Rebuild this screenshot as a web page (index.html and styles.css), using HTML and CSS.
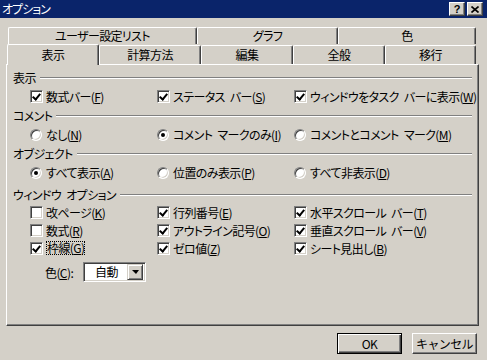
FILE: index.html
```html
<!DOCTYPE html>
<html lang="ja">
<head>
  <meta charset="UTF-8" />
  <title>オプション</title>
  <link rel="stylesheet" href="styles.css">
</head>
<body>

<div class="titlebar">
  <span class="title">オプション</span>
  <div class="caption-buttons">
    <span class="cap-btn help">?</span>
    <span class="cap-btn">
      <svg width="8" height="7" viewBox="0 0 8 7"><path d="M0.5 0.5 L7.5 6.5 M7.5 0.5 L0.5 6.5" stroke="#000" stroke-width="1.6"/></svg>
    </span>
  </div>
</div>

<div class="tabs">
  <div class="tab-row back">
    <div class="tab">ユーザー設定リスト</div>
    <div class="tab">グラフ</div>
    <div class="tab">色</div>
  </div>
  <div class="tab-row front">
    <div class="tab selected">表示</div>
    <div class="tab">計算方法</div>
    <div class="tab">編集</div>
    <div class="tab">全般</div>
    <div class="tab">移行</div>
  </div>
</div>

<div class="panel">
  <div class="group">
    <div class="group-title"><span>表示</span></div>
    <div class="opts">
      <div class="opt"><span class="chk on"></span>数式バー(<u>F</u>)</div>
      <div class="opt"><span class="chk on"></span>ステータス バー(<u>S</u>)</div>
      <div class="opt"><span class="chk on"></span>ウィンドウをタスク バーに表示(<u>W</u>)</div>
    </div>
  </div>

  <div class="group">
    <div class="group-title"><span>コメント</span></div>
    <div class="opts">
      <div class="opt"><span class="radio"></span>なし(<u>N</u>)</div>
      <div class="opt"><span class="radio on"></span>コメント マークのみ(<u>I</u>)</div>
      <div class="opt"><span class="radio"></span>コメントとコメント マーク(<u>M</u>)</div>
    </div>
  </div>

  <div class="group">
    <div class="group-title"><span>オブジェクト</span></div>
    <div class="opts">
      <div class="opt"><span class="radio on"></span>すべて表示(<u>A</u>)</div>
      <div class="opt"><span class="radio"></span>位置のみ表示(<u>P</u>)</div>
      <div class="opt"><span class="radio"></span>すべて非表示(<u>D</u>)</div>
    </div>
  </div>

  <div class="group window-opts">
    <div class="group-title"><span>ウィンドウ オプション</span></div>
    <div class="opts">
      <div class="opt"><span class="chk"></span>改ページ(<u>K</u>)</div>
      <div class="opt"><span class="chk on"></span>行列番号(<u>E</u>)</div>
      <div class="opt"><span class="chk on"></span>水平スクロール バー(<u>T</u>)</div>
      <div class="opt"><span class="chk"></span>数式(<u>R</u>)</div>
      <div class="opt"><span class="chk on"></span>アウトライン記号(<u>O</u>)</div>
      <div class="opt"><span class="chk on"></span>垂直スクロール バー(<u>V</u>)</div>
      <div class="opt"><span class="chk on"></span><span class="focus">枠線(<u>G</u>)</span></div>
      <div class="opt"><span class="chk on"></span>ゼロ値(<u>Z</u>)</div>
      <div class="opt"><span class="chk on"></span>シート見出し(<u>B</u>)</div>
    </div>
    <div class="color-row">
      <span class="color-label">色(<u>C</u>):</span>
      <div class="combo">
        <span class="combo-text">自動</span>
        <span class="combo-arrow"></span>
      </div>
    </div>
  </div>
</div>

<div class="buttons">
  <button class="btn default">OK</button>
  <button class="btn">キャンセル</button>
</div>

</body>
</html>
```

FILE: styles.css
```css
body {
  margin: 0;
  width: 487px;
  height: 360px;
  overflow: hidden;
  background-color: #D4D0C8;
  font-family: "Noto Sans CJK JP", "Liberation Sans", sans-serif;
  font-size: 12px;
  font-feature-settings: "palt";
  letter-spacing: -0.6px;
  word-spacing: 3px;
  color: #000;
}

u {
  text-decoration: underline;
  text-underline-offset: 1px;
}

/* title bar */
.titlebar {
  display: flex;
  justify-content: space-between;
  align-items: center;
  height: 18px;
  padding: 0 4px 0 2px;
  background-color: #0A246A;
}

.title {
  color: #fff;
  font-size: 12px;
  line-height: 18px;
  letter-spacing: -1px;
}

.caption-buttons {
  display: flex;
  gap: 2px;
}

.cap-btn {
  display: flex;
  justify-content: center;
  align-items: center;
  width: 16px;
  height: 14px;
  box-sizing: border-box;
  background-color: #D4D0C8;
  border-top: 1px solid #fff;
  border-left: 1px solid #fff;
  border-right: 1px solid #404040;
  border-bottom: 1px solid #404040;
  box-shadow: inset -1px -1px #808080;
  font-family: "Liberation Sans", sans-serif;
  font-weight: bold;
  font-size: 11px;
  line-height: 12px;
  letter-spacing: 0;
}

/* tabs */
.tabs {
  margin-top: 9px;
}

.tab-row {
  display: grid;
}

.tab-row.back {
  grid-template-columns: 189px 141px 138px;
  margin-left: 8px;
}

.tab-row.front {
  grid-template-columns: 92px 102px 92px 92px 91px;
  margin-left: 7px;
  align-items: end;
}

.tab {
  box-sizing: border-box;
  border-top: 1px solid #fff;
  border-left: 1px solid #fff;
  border-right: 1px solid #404040;
  border-radius: 2px 2px 0 0;
  box-shadow: inset -1px 0 #808080;
  text-align: center;
  background-color: #D4D0C8;
}

.back .tab {
  height: 17px;
  line-height: 16px;
}

.front .tab {
  height: 19px;
  line-height: 18px;
}

.front .tab.selected {
  position: relative;
  z-index: 1;
  height: 21px;
  margin-bottom: -1px;
  line-height: 19px;
}

/* panel */
.panel {
  box-sizing: border-box;
  width: 473px;
  height: 262px;
  margin-left: 6px;
  padding: 4px 6px 0 6px;
  border-top: 1px solid #fff;
  border-left: 1px solid #fff;
  border-right: 1px solid #404040;
  border-bottom: 1px solid #404040;
  box-shadow: inset -1px -1px #808080;
}

.group-title {
  display: flex;
  align-items: center;
  height: 18px;
  line-height: 18px;
}

.group-title::after {
  content: "";
  flex: 1;
  margin-left: 4px;
  border-top: 1px solid #808080;
  border-bottom: 1px solid #fff;
}

.group + .group {
  margin-top: 1px;
}

.group.window-opts {
  margin-top: 4px;
}

.opts {
  display: grid;
  grid-template-columns: 127px 137px 1fr;
  margin-left: 17px;
}

.opt {
  display: flex;
  align-items: center;
  height: 19px;
  line-height: 19px;
  white-space: pre;
}

.window-opts .group-title {
  height: 17px;
}

.window-opts .opt {
  height: 18px;
}

/* checkbox */
.chk {
  position: relative;
  flex: none;
  width: 13px;
  height: 13px;
  box-sizing: border-box;
  margin-right: 3px;
  background-color: #fff;
  border-top: 1px solid #808080;
  border-left: 1px solid #808080;
  border-bottom: 1px solid #fff;
  border-right: 1px solid #fff;
  box-shadow: inset 1px 1px #404040, inset -1px -1px #D4D0C8;
}

.chk.on::after {
  content: "";
  position: absolute;
  left: 3px;
  top: 1px;
  width: 3px;
  height: 6px;
  border-right: 2px solid #000;
  border-bottom: 2px solid #000;
  transform: rotate(40deg);
}

/* radio */
.radio {
  position: relative;
  flex: none;
  width: 12px;
  height: 12px;
  box-sizing: border-box;
  margin-right: 4px;
  border-radius: 50%;
  background-color: #fff;
  border-top: 1px solid #808080;
  border-left: 1px solid #808080;
  border-bottom: 1px solid #fff;
  border-right: 1px solid #fff;
  box-shadow: inset 1px 1px #404040, inset -1px -1px #D4D0C8;
}

.radio.on::after {
  content: "";
  position: absolute;
  left: 3px;
  top: 3px;
  width: 4px;
  height: 4px;
  border-radius: 50%;
  background-color: #000;
}

.focus {
  outline: 1px dotted #000;
  outline-offset: -1px;
  padding: 0 1px;
  line-height: 14px;
}

/* colour combo */
.color-row {
  display: flex;
  align-items: center;
  height: 22px;
  margin-top: 4px;
  margin-left: 32px;
}

.color-label {
  width: 38px;
}

.combo {
  display: flex;
  align-items: center;
  justify-content: space-between;
  box-sizing: border-box;
  width: 63px;
  height: 20px;
  padding: 2px;
  background-color: #fff;
  border-top: 1px solid #808080;
  border-left: 1px solid #808080;
  border-bottom: 1px solid #fff;
  border-right: 1px solid #fff;
  box-shadow: inset 1px 1px #404040, inset -1px -1px #D4D0C8;
}

.combo-text {
  padding-left: 9px;
  line-height: 14px;
}

.combo-arrow {
  display: flex;
  justify-content: center;
  align-items: center;
  box-sizing: border-box;
  width: 16px;
  height: 16px;
  background-color: #D4D0C8;
  border-top: 1px solid #D4D0C8;
  border-left: 1px solid #D4D0C8;
  border-right: 1px solid #404040;
  border-bottom: 1px solid #404040;
  box-shadow: inset 1px 1px #fff, inset -1px -1px #808080;
}

.combo-arrow::after {
  content: "";
  border-left: 4px solid transparent;
  border-right: 3px solid transparent;
  border-top: 4px solid #000;
}

/* bottom buttons */
.buttons {
  display: flex;
  justify-content: flex-end;
  gap: 10px;
  margin-top: 7px;
  padding-right: 10px;
}

.btn {
  box-sizing: border-box;
  width: 65px;
  height: 21px;
  padding: 0;
  font-family: inherit;
  font-size: 12px;
  letter-spacing: inherit;
  color: #000;
  background-color: #D4D0C8;
  border-top: 1px solid #fff;
  border-left: 1px solid #fff;
  border-right: 1px solid #404040;
  border-bottom: 1px solid #404040;
  box-shadow: inset -1px -1px #808080;
}

.btn.default {
  border: 1px solid #000;
  box-shadow: inset 1px 1px #fff, inset -1px -1px #404040, inset -2px -2px #808080;
}
```
